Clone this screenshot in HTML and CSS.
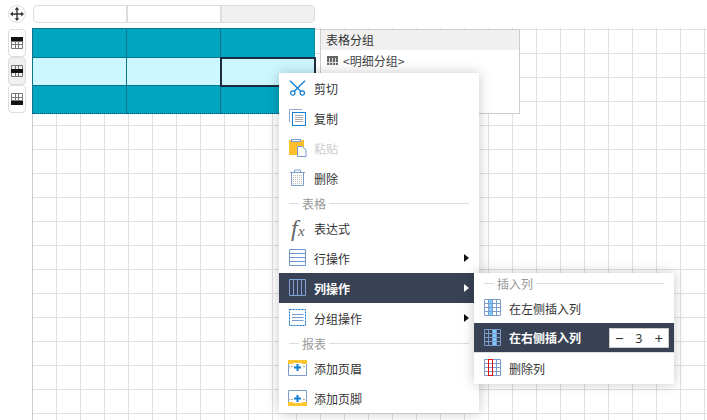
FILE: index.html
```html
<!DOCTYPE html>
<html lang="zh">
<head>
<meta charset="utf-8">
<title>表格</title>
<link rel="stylesheet" href="styles.css">
</head>
<body>
<div class="stage">
  <div class="top-row">
    <div class="move-handle">
      <svg width="14" height="14" viewBox="0 0 14 14"><path d="M7 1v12M1 7h12" stroke="#333" stroke-width="1.4" fill="none"/><path d="M7 0l2.4 2.8H4.6zM7 14l2.4-2.8H4.6zM0 7l2.8-2.4v4.8zM14 7l-2.8-2.4v4.8z" fill="#333"/></svg>
    </div>
    <div class="col-header">
      <div class="col-cell"></div>
      <div class="col-cell"></div>
      <div class="col-cell col-cell-active"></div>
    </div>
  </div>
  <div class="main-row">
    <div class="row-handles">
      <div class="row-handle">
        <svg width="12" height="12" viewBox="0 0 12 12"><path d="M.5.5h11v11H.5zM4.500.5v11M7.500.5v11M.5 4.500h11M.5 7.500h11" fill="none" stroke="#777"/><rect width="12" height="4" fill="#111"/></svg>
      </div>
      <div class="row-handle row-handle-active">
        <svg width="12" height="12" viewBox="0 0 12 12"><path d="M.5.5h11v11H.5zM4.500.5v11M7.500.5v11M.5 4.500h11M.5 7.500h11" fill="none" stroke="#777"/><rect y="4" width="12" height="4" fill="#111"/></svg>
      </div>
      <div class="row-handle">
        <svg width="12" height="12" viewBox="0 0 12 12"><path d="M.5.5h11v11H.5zM4.500.5v11M7.500.5v11M.5 4.500h11M.5 7.500h11" fill="none" stroke="#777"/><rect y="8" width="12" height="4" fill="#111"/></svg>
      </div>
    </div>
    <div class="canvas">
      <div class="report-table">
        <div class="cell"></div><div class="cell"></div><div class="cell"></div>
        <div class="cell cell-light"></div><div class="cell cell-light"></div><div class="cell cell-light cell-selected"></div>
        <div class="cell cell-last"></div><div class="cell cell-last"></div><div class="cell cell-last"></div>
      </div>
      <div class="group-panel">
        <div class="group-title">表格分组</div>
        <div class="group-row">
          <svg width="11" height="9" viewBox="0 0 11 9"><rect width="11" height="9" fill="#666"/><path d="M2.500 2v7M5.500 2v7M8.500 2v7M0 6.500h11" stroke="#ddd"/></svg>
          <span>&lt;明细分组&gt;</span>
        </div>
      </div>
    </div>
  </div>

  <div class="menu">
    <div class="item">
      <svg class="icon" viewBox="0 0 18 18"><path d="M1 1.700l11 10.800M16 1.700L5 12.500" fill="none" stroke="#0f7fd8" stroke-width="1.300"/><circle cx="3.800" cy="14" r="2.200" fill="none" stroke="#0f7fd8" stroke-width="1.200"/><circle cx="13.300" cy="14" r="2.200" fill="none" stroke="#0f7fd8" stroke-width="1.200"/></svg>
      <span>剪切</span>
    </div>
    <div class="item">
      <svg class="icon" viewBox="0 0 18 18"><path d="M13 .5H.5V13" fill="none" stroke="#8fa9d0"/><rect x="3.500" y="3.500" width="13" height="13" fill="#fff" stroke="#1b7fd0"/><path d="M6 6.500h8M6 8.500h8M6 10.500h8M6 12.500h8" stroke="#aaa"/></svg>
      <span>复制</span>
    </div>
    <div class="item item-disabled">
      <svg class="icon" viewBox="0 0 18 18"><rect x="0" y="1" width="15" height="15" fill="#fdbf2d"/><rect x="2.500" y=".5" width="9" height="2" fill="#fff" stroke="#7a9ccc"/><path d="M8.500 7.500h5l3.500 3.500v6.500H8.500z" fill="#fff" stroke="#7a9ccc"/></svg>
      <span>粘贴</span>
    </div>
    <div class="item">
      <svg class="icon" viewBox="0 0 18 18"><defs><pattern id="stipple" width="2" height="2" patternUnits="userSpaceOnUse"><rect width="1" height="1" fill="#bbb"/></pattern></defs><rect x="3" y="5" width="11" height="11" fill="url(#stipple)"/><path d="M1 3.500h15M2.500 3.500h12v13h-12zM5.500 3.500v-2.500h6v2.500" fill="none" stroke="#7a9ccc"/></svg>
      <span>删除</span>
    </div>
    <div class="section"><span>表格</span></div>
    <div class="item">
      <span class="icon icon-fx"><i class="fx-f">f</i><i class="fx-x">x</i></span>
      <span>表达式</span>
    </div>
    <div class="item">
      <svg class="icon" viewBox="0 0 18 18"><path d="M.5.500h16v16H.5zM.5 4.500h16M.5 8.500h16M.5 12.500h16" fill="none" stroke="#6f95cc"/></svg>
      <span>行操作</span>
      <b class="arrow"></b>
    </div>
    <div class="item item-active">
      <svg class="icon" viewBox="0 0 18 18"><path d="M.5.500h16v16H.5zM4.500.5v16M8.500.5v16M12.500.5v16" fill="none" stroke="#7ea3d8"/></svg>
      <span>列操作</span>
      <b class="arrow"></b>
    </div>
    <div class="item">
      <svg class="icon" viewBox="0 0 18 18"><path d="M.5.500h16v16H.5z" fill="none" stroke="#0a70c8" stroke-dasharray="2 1"/><path d="M3 5.500h11.500M3 8.500h11.500M3 11.500h11.500" stroke="#7a9ccc"/></svg>
      <span>分组操作</span>
      <b class="arrow"></b>
    </div>
    <div class="section"><span>报表</span></div>
    <div class="item">
      <svg class="icon icon-wide" viewBox="0 0 19 18"><path d="M.5 1.500h18v15H.5z" fill="#fff" stroke="#7a9ccc"/><rect y="1" width="19" height="4" fill="#fdc52f"/><path d="M0 7.500h19" stroke="#aaa" stroke-dasharray="2 1"/><rect x="5" y="4" width="9" height="9" fill="#fff"/><path d="M9.500 5v7M6 8.500h7" stroke="#0f7fd8" stroke-width="2"/></svg>
      <span>添加页眉</span>
    </div>
    <div class="item">
      <svg class="icon icon-wide" viewBox="0 0 19 18"><path d="M.5 1.500h18v15H.5z" fill="#fff" stroke="#7a9ccc"/><rect y="13" width="19" height="4" fill="#fdc52f"/><path d="M0 10.500h19" stroke="#aaa" stroke-dasharray="2 1"/><rect x="5" y="5" width="9" height="9" fill="#fff"/><path d="M9.500 6v7M6 9.500h7" stroke="#0f7fd8" stroke-width="2"/></svg>
      <span>添加页脚</span>
    </div>

    <div class="submenu">
      <div class="section"><span>插入列</span></div>
      <div class="item">
        <svg class="icon" viewBox="0 0 18 18"><rect x="4" y="1" width="5" height="15" fill="#7fcbff"/><path d="M.5.500h16v16H.5zM4.500.5v16M8.500.5v16M12.500.5v16M.5 4.500h16M.5 8.500h16M.5 12.500h16" fill="none" stroke="#7a9ccc"/></svg>
        <span>在左侧插入列</span>
      </div>
      <div class="item item-active">
        <svg class="icon" viewBox="0 0 18 18"><rect x="8" y="1" width="5" height="15" fill="#7fcbff"/><path d="M.5.500h16v16H.5zM4.500.5v16M8.500.5v16M12.500.5v16M.5 4.500h16M.5 8.500h16M.5 12.500h16" fill="none" stroke="#7a9ccc"/></svg>
        <span>在右侧插入列</span>
        <div class="stepper"><span class="step-sign">−</span><span>3</span><span class="step-sign">+</span></div>
      </div>
      <div class="item">
        <svg class="icon" viewBox="0 0 18 18"><path d="M.5.500h16v16H.5zM4.500.5v16M8.500.5v16M12.500.5v16M.5 4.500h16M.5 8.500h16M.5 12.500h16" fill="none" stroke="#7a9ccc"/><rect x="4.500" y=".5" width="4" height="16" fill="none" stroke="#e01010"/></svg>
        <span>删除列</span>
      </div>
    </div>
  </div>
</div>
</body>
</html>
```
FILE: styles.css
```css
* { box-sizing: border-box; }
html, body { margin: 0; padding: 0; background: #fff; }
body { font-family: "Noto Sans CJK SC", "Noto Sans", sans-serif; font-size: 12px; color: #333; }
.stage { position: relative; width: 707px; height: 420px; overflow: hidden; display: flex; flex-direction: column; }

.top-row { display: flex; align-items: flex-start; height: 28px; padding: 5px 0 0 8px; }
.move-handle { width: 18px; height: 18px; border: 1px solid #ddd; border-radius: 50%; display: flex; align-items: center; justify-content: center; }
.col-header { display: flex; margin-left: 7px; width: 282px; height: 18px; border: 1px solid #ddd; border-radius: 4px; overflow: hidden; }
.col-cell { width: 94px; border-right: 2px solid #ddd; }
.col-cell-active { flex: 1; border-right: 0; background: #f0f0f0; }

.main-row { display: flex; flex: 1; padding-left: 8px; }
.row-handles { width: 24px; padding-top: 1px; flex: none; }
.row-handle { width: 18px; height: 28px; border: 1px solid #ddd; border-radius: 4px; display: flex; align-items: center; justify-content: center; }
.row-handle-active { background: #f0f0f0; }

.canvas {
  position: relative; flex: 1;
  background-color: #fff;
  background-image: linear-gradient(#ccc, #ccc), linear-gradient(to right, #e0e0e0 1px, transparent 1px), linear-gradient(to bottom, #e0e0e0 1px, transparent 1px);
  background-size: 1px 100%, 24px 24px, 24px 24px;
  background-position: 0 0, 0 1px, 0 1px;
  background-repeat: no-repeat, repeat, repeat;
}
.report-table {
  display: grid; grid-template-columns: 94px 94px 94px; grid-template-rows: 29px 28px 28px;
  width: 283px; border-top: 1px solid #0b7689; border-left: 1px solid #0b7689;
}
.cell { background: #00a5c2; border-right: 1px solid #0b7689; border-bottom: 1px solid #0b7689; }
.cell-light { background: #ccf7ff; }
.cell-last { border-bottom: 1px dotted #0b4a58; }
.cell:nth-child(3n) { border-right: 1px dotted #0b7689; }
.cell-selected { outline: 2px solid #1e2b40; outline-offset: -1px; position: relative; }

.group-panel { position: absolute; left: 288px; top: 1px; width: 200px; height: 85px; background: #fff; border: 1px solid #ccc; }
.group-title { height: 20px; line-height: 20px; padding-left: 5px; background: #f0f0f0; font-size: 12px; color: #333; }
.group-row { display: flex; align-items: center; gap: 5px; padding: 0 0 0 6px; height: 20px; font-size: 12px; color: #444; }

.menu { position: absolute; left: 279px; top: 73px; width: 200px; height: 340px; background: #fff; box-shadow: 0 0 12px rgba(0,0,0,.22); }
.item { position: relative; display: flex; align-items: center; height: 30px; padding-left: 10px; color: #333; font-size: 12px; }
.icon { flex: none; display: block; width: 18px; height: 18px; margin-right: 7px; }
.icon-wide { width: 19px; margin-left: -1px; }
.item-disabled { color: #ccc; }
.item-active { background: #384254; color: #fff; font-weight: 700; }
.arrow { position: absolute; right: 10px; top: 11px; width: 0; height: 0; border-left: 5px solid #111; border-top: 4px solid transparent; border-bottom: 4px solid transparent; }
.item-active .arrow { border-left-color: #fff; }

.section { display: flex; align-items: center; height: 20px; padding: 0 10px; color: #999; font-size: 12px; gap: 3px; }
.section::before { content: ""; width: 10px; height: 1px; background: #ddd; }
.section::after { content: ""; flex: 1; height: 1px; background: #ddd; }

.icon-fx { position: relative; font-family: "Liberation Serif", serif; color: #666; }
.fx-f { position: absolute; left: 2px; top: -6px; font-size: 24px; line-height: 30px; }
.fx-x { position: absolute; left: 9px; top: 4px; font-size: 15px; line-height: 16px; }

.submenu { position: absolute; left: 195px; top: 200px; width: 200px; height: 111px; background: #fff; box-shadow: 0 0 12px rgba(0,0,0,.22); }
.submenu .item-active { border-bottom: 1px solid #ddd; box-sizing: content-box; height: 29px; }
.stepper { position: absolute; left: 135px; top: 5px; width: 60px; height: 20px; display: flex; justify-content: space-between; align-items: center; padding: 0 5px; background: #fff; border: 1px solid #ccc; color: #333; font-weight: 400; font-size: 12px; font-family: "Noto Sans", sans-serif; }
.step-sign { font-size: 15px; line-height: 18px; }
```
